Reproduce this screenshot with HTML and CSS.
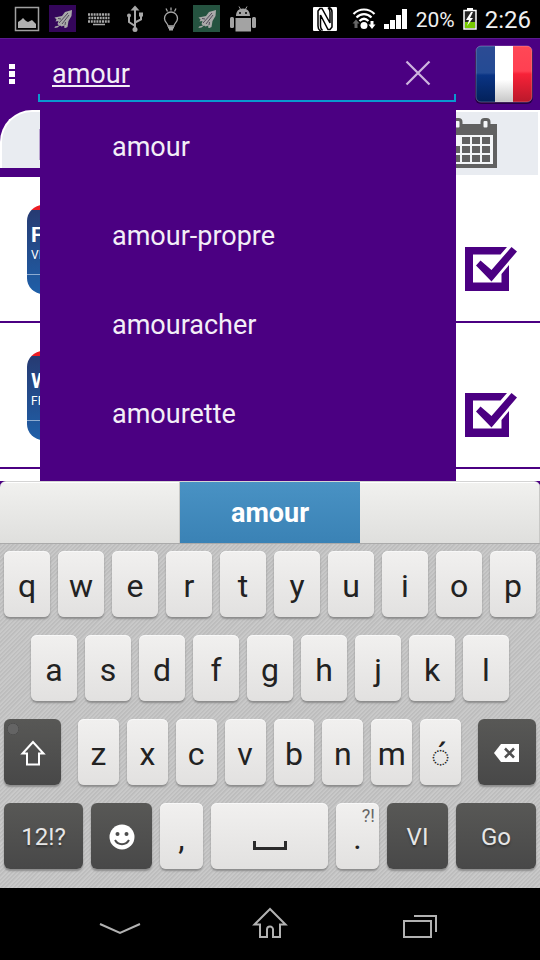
FILE: index.html
```html
<!DOCTYPE html>
<html lang="en">
<head>
<meta charset="utf-8">
<meta name="viewport" content="width=device-width, initial-scale=1">
<title>Dictionary search</title>
<link rel="stylesheet" href="styles.css">
</head>
<body>
<div class="screen">
  <header class="status">
    <div class="notices">
      <svg viewBox="0 0 36 38"><path d="M6.500 7.500h23v23h-23z" fill="none" stroke="#a0a0a0" stroke-width="1.500"/><path d="M9 28v-6l3-2 2-2 3 3 2 1 4-2 4 4v4z" fill="#b0b0b0"/></svg>
      <svg viewBox="0 0 36 38"><path d="M4 5h27v27H4z" fill="#34065a"/><use href="#plane"/></svg>
      <svg viewBox="0 0 36 38"><path d="M7 14.500h22M7.500 18h21M7 21.500h22" stroke="#a8a8a8" stroke-width="2.500" stroke-dasharray="2 .8"/><path d="M12 24.500h12" stroke="#a8a8a8" stroke-width="1.500"/></svg>
      <svg viewBox="0 0 36 38" fill="none" stroke="#a8a8a8" stroke-width="2"><path d="M18 29V8M18 26l-6-4v-6M18 22.500l6-3V15"/><path d="M13.500 10.500l4.500-5 4.500 5z" fill="#a8a8a8" stroke="none"/><circle cx="18" cy="29.500" r="2.500" fill="#a8a8a8" stroke="none"/><circle cx="12" cy="15.500" r="2" fill="#a8a8a8" stroke="none"/><path d="M22 12.500h4v4h-4z" fill="#a8a8a8" stroke="none"/></svg>
      <svg viewBox="0 0 36 38" fill="none" stroke="#a8a8a8" stroke-width="1.300"><path d="M15 26c0-3-3.500-3.500-3.500-7.500a6.500 6.500 0 0 1 13 0c0 4-3.500 4.500-3.500 7.500z"/><path d="M15 27.500h6M16 29.500h4" stroke-width="2"/><path d="M13 8.500l1.500 3M18 7.500v3M23 8.500l-1.500 3"/></svg>
      <svg viewBox="0 0 36 38"><path d="M4 5h27v27H4z" fill="#255340"/><use href="#plane"/></svg>
      <svg viewBox="0 0 36 38" fill="#a3a3a3"><path d="M11 16c0-4.500 2.500-7.500 7-7.500s7 3 7 7.500zM10.500 18h15.500v13.500H10.500z"/><path d="M14 6.500l2 3.500M22 6.500l-2 3.500" stroke="#a3a3a3"/><rect x="5" y="17" width="4" height="11" rx="1.500"/><rect x="27" y="17" width="4" height="11" rx="1.500"/><circle cx="15" cy="13" r="1" fill="#000"/><circle cx="21" cy="13" r="1" fill="#000"/></svg>
    </div>
    <div class="system">
      <svg class="nfc" viewBox="0 0 24 24"><rect width="24" height="24" rx="1" fill="#fff"/><path d="M8 24c-2.500-1-3-3-3-5V4l2-2.500h2L17 16V5c0-2-.5-3-2-4.500M16 .5c2.500 1 3 2 3 4.500v15l-2 2.500h-2L7.500 8v11c0 2 .5 3 2 4.500" fill="none" stroke="#000" stroke-width="1.500"/></svg>
      <svg class="wifi" viewBox="0 0 24 22" fill="none" stroke="#fff" stroke-width="2.200"><path d="M1.500 6c6-6 15-6 21 0M4.500 9.500c4.500-4.500 10.500-4.500 15 0M7.500 13c3-3 6-3 9 0"/><circle cx="12" cy="17.500" r="3.500" fill="#fff" stroke="none"/><path d="M18.500 13v3.500H16.500l3.500 4.500 3.500-4.500h-2V13z" fill="#fff" stroke="none"/><path d="M2.500 20v-4.500H.5L4 11.500l3.500 4h-2V20z" fill="#666" stroke="none"/></svg>
      <svg class="signal" viewBox="0 0 24 20" fill="#fff"><path d="M0 15h5v5H0zM6 11h5v9H6zM12 6h5v14h-5zM18 0h5v20h-5z"/></svg>
      <span class="percent">20%</span>
      <svg class="battery" viewBox="0 0 14 22"><path d="M4 0h6v2H4z" fill="#fff"/><path d="M1 2.500h12v18.500H1z" fill="#222" stroke="#fff" stroke-width="1.500"/><path d="M2 14h10v6H2z" fill="#76c900"/><path d="M8 4l-5 8h3l-2 6 6-8H7l3-6z" fill="#fff"/></svg>
      <time class="clock">2:26</time>
    </div>
  </header>

  <div class="searchbar">
    <button class="menu" aria-label="Menu"><svg viewBox="0 0 6 20" fill="#fff"><path d="M0 0h6v5H0zM0 7h6v6H0zM0 15h6v5H0z"/></svg></button>
    <div class="field">
      <input class="query" type="text" value="amour" aria-label="Search word">
      <button class="clear" aria-label="Clear"><svg viewBox="0 0 26 26" fill="none" stroke="#ceb5df" stroke-width="2.200"><path d="M1.500 1.500l23 23M24.500 1.500l-23 23"/></svg></button>
    </div>
    <button class="flag" aria-label="French">
      <svg viewBox="0 0 60 60">
        <defs>
          <linearGradient id="blue" x2="0" y2="1"><stop offset="0" stop-color="#2c4b94"/><stop offset=".48" stop-color="#244b94"/><stop offset=".52" stop-color="#0a3484"/><stop offset="1" stop-color="#022058"/></linearGradient>
          <linearGradient id="white" x2="0" y2="1"><stop offset=".6" stop-color="#fff"/><stop offset="1" stop-color="#c4c4c4"/></linearGradient>
          <linearGradient id="red" x2="0" y2="1"><stop offset="0" stop-color="#ff4856"/><stop offset=".45" stop-color="#ff4052"/><stop offset=".5" stop-color="#f72238"/><stop offset="1" stop-color="#b8182a"/></linearGradient>
          <clipPath id="round"><rect x="2" y="1" width="56" height="56" rx="5"/></clipPath>
        </defs>
        <rect x="1" y="2" width="58" height="57" rx="6" fill="#250044"/>
        <g clip-path="url(#round)"><path d="M0 0h21v58H0z" fill="url(#blue)"/><path d="M21 0h18v58H21z" fill="url(#white)"/><path d="M39 0h21v58H39z" fill="url(#red)"/></g>
        <rect x="2" y="1" width="56" height="56" rx="5" fill="none" stroke="#ffffff44"/>
      </svg>
    </button>
  </div>

  <main class="content">
    <div class="tabs">
      <button class="tab tab-active" aria-label="Words"><span class="tab-mark"></span></button>
      <button class="tab tab-calendar" aria-label="Calendar">
        <svg viewBox="0 0 56 51"><path d="M0 6h56v44H0z" fill="#616161"/><path d="M3 17h49v29H3z" fill="#f4f6f8"/><path d="M21 19h8v7h-8zM31 19h8v7h-8zM41 19h8v7h-8zM11 28h8v7h-8zM21 28h8v7h-8zM31 28h8v7h-8zM41 28h8v7h-8zM11 37h8v7h-8zM21 37h8v7h-8zM31 37h8v7h-8zM41 37h8v7h-8z" fill="#616161"/><g fill="#f4f6f8" stroke="#616161" stroke-width="3"><rect x="13" y="1.500" width="7" height="9.500" rx="2.500"/><rect x="41" y="1.500" width="7" height="9.500" rx="2.500"/></g></svg>
      </button>
    </div>
    <ul class="rows">
      <li class="row"><div class="badge"><b>F</b><span>VI</span></div><svg class="check" viewBox="0 0 52 46" fill="#4b0082"><use href="#tick"/></svg></li>
      <li class="row"><div class="badge"><b>W</b><span>FR</span></div><svg class="check" viewBox="0 0 52 46" fill="#4b0082"><use href="#tick"/></svg></li>
    </ul>
    <ul class="suggestions">
      <li><button>amour</button></li>
      <li><button>amour-propre</button></li>
      <li><button>amouracher</button></li>
      <li><button>amourette</button></li>
    </ul>
  </main>

  <section class="keyboard" aria-label="Keyboard">
    <div class="predictions">
      <button aria-label="Previous prediction"></button>
      <button class="chosen">amour</button>
      <button aria-label="Next prediction"></button>
    </div>
    <div class="keys">
      <div class="keyrow"><button>q</button><button>w</button><button>e</button><button>r</button><button>t</button><button>y</button><button>u</button><button>i</button><button>o</button><button>p</button></div>
      <div class="keyrow inset"><button>a</button><button>s</button><button>d</button><button>f</button><button>g</button><button>h</button><button>j</button><button>k</button><button>l</button></div>
      <div class="keyrow third">
        <button class="dark shift" aria-label="Shift"><svg viewBox="0 0 26 26" fill="none" stroke="#fff" stroke-width="2"><path d="M13 2L2.500 13.500H7V24.500h12V13.500h4.500z"/></svg></button>
        <div class="letters"><button>z</button><button>x</button><button>c</button><button>v</button><button>b</button><button>n</button><button>m</button><button class="accent">◌́</button></div>
        <button class="dark erase" aria-label="Backspace"><svg viewBox="0 0 26 20"><path d="M0 10L7 1h18v18H7z" fill="#fff"/><path d="M11 5.500l9 9M20 5.500l-9 9" stroke="#505050" stroke-width="2.500"/></svg></button>
      </div>
      <div class="keyrow fourth">
        <button class="dark">12!?</button>
        <button class="dark" aria-label="Emoji"><svg viewBox="0 0 26 26"><circle cx="13" cy="13" r="12.500" fill="#fff"/><circle cx="8.500" cy="10" r="2" fill="#4c4c4c"/><circle cx="17.500" cy="10" r="2" fill="#4c4c4c"/><path d="M6 16c3 5.500 11 5.500 14 0" fill="none" stroke="#4c4c4c" stroke-width="2"/></svg></button>
        <button>,</button>
        <button class="space" aria-label="Space"><svg viewBox="0 0 34 10" fill="none" stroke="#2b2b2b" stroke-width="3"><path d="M1.500 0v7.500h31V0"/></svg></button>
        <button class="dot">.<small>?!</small></button>
        <button class="dark">VI</button>
        <button class="dark">Go</button>
      </div>
    </div>
  </section>

  <nav class="navbar">
    <button aria-label="Back"><svg viewBox="0 0 44 36" fill="none" stroke="#b2b2b2" stroke-width="2"><path d="M2 18l20 9 20-9"/></svg></button>
    <button aria-label="Home"><svg viewBox="0 0 44 36" fill="none" stroke="#b2b2b2" stroke-width="2"><path d="M22 3L6.500 18.500H12V31h7v-7.500a3 3 0 0 1 6 0V31h7V18.500h5.500z"/></svg></button>
    <button aria-label="Recent apps"><svg viewBox="0 0 44 36" fill="none" stroke="#b2b2b2" stroke-width="2"><path d="M6 15h27v16H6zM16 10h22V26"/></svg></button>
  </nav>
</div>

<svg class="defs" aria-hidden="true">
  <symbol id="plane" viewBox="0 0 36 38" width="36" height="38"><path d="M27 10l-7 2-3 4-7.500 1.500 2 2-1 2 3-.5-1 3 1.500 1.500-4 1-.5 1.500 3-.5 2.500-2 1.500 1 3-1-.5 2 1.500.500 2-1 1-6 3-5z" fill="#a9a9a9"/><path d="M23 13l-9 10M24 15l-7 9M13 18.500l3 .5M20 25l.5-3" stroke="#3b3145" stroke-width=".8"/></symbol>
  <symbol id="tick" viewBox="0 0 52 46" width="52" height="46"><path d="M0 0h42l-6.500 7.500H8v28h28.500v-8.500l7.500-9v26H0z"/><path d="M11 18.500l4.500-5 11 9.500L46.500 0l5.500 4.500L26.500 34.500z"/></symbol>
</svg>
</body>
</html>
```

FILE: styles.css
```css
* { box-sizing: border-box; }

body {
  margin: 0;
  background: #000;
  font-family: Roboto, "Liberation Sans", sans-serif;
}

button {
  margin: 0;
  padding: 0;
  border: 0;
  background: none;
  font: inherit;
  color: inherit;
}

svg { display: block; }
ul { margin: 0; padding: 0; list-style: none; }

.defs { position: absolute; width: 0; height: 0; }

.screen {
  display: flex;
  flex-direction: column;
  min-height: 100vh;
}

/* Status bar */
.status {
  display: flex;
  justify-content: space-between;
  height: 38px;
  padding: 0 9px;
  color: #f0f0f0;
}
.notices { display: flex; }
.notices svg { width: 36px; height: 38px; }
.system { display: flex; align-items: center; gap: 8px; }
.nfc { width: 24px; height: 24px; margin-right: 7px; }
.wifi { width: 24px; height: 22px; }
.signal { width: 24px; height: 20px; }
.percent { font-size: 21px; padding-top: 2px; }
.battery { width: 14px; height: 22px; }
.clock { font-size: 24px; padding-top: 2px; }

/* Search bar */
.searchbar {
  display: flex;
  align-items: center;
  height: 72px;
  padding: 0 6px 0 9px;
  background: #4b0082;
  box-shadow: inset 0 1px #5b1a90;
}
.menu svg { width: 6px; height: 20px; }
.field {
  position: relative;
  display: flex;
  align-items: center;
  flex: 1;
  height: 72px;
  margin: 0 18px 0 23px;
  padding: 0 25px 2px 14px;
}
.field::after {
  content: "";
  position: absolute;
  inset: auto 0 8px 0;
  height: 6px;
  border: 2px solid #0a98cf;
  border-top: 0;
  pointer-events: none;
}
.query {
  flex: 1;
  min-width: 0;
  padding: 2px 0 0;
  border: 0;
  outline: 0;
  background: none;
  color: #f3eef7;
  font: 27px Roboto, "Liberation Sans", sans-serif;
  text-decoration: underline;
  text-decoration-thickness: 2px;
  text-underline-offset: 2px;
}
.clear svg { width: 26px; height: 26px; }
.flag { padding-top: 2px; }
.flag svg { width: 60px; height: 60px; }

/* Word list */
.content {
  position: relative;
  flex: 1;
  background: #fff;
}
.tabs {
  display: grid;
  grid-template-columns: 1fr 1fr;
  height: 67px;
}
.tab-active {
  background: #4b0082;
  padding-bottom: 9px;
}
.tab-mark {
  display: block;
  height: 58px;
  border: 2px solid #fff;
  border-width: 2px 0 0 2px;
  border-radius: 32px 0 0 0;
  background: linear-gradient(#b9a3cf, #b9a3cf) 37px 17px / 1px 31px no-repeat #e9ecf1;
}
.tab-calendar {
  display: flex;
  justify-content: flex-end;
  margin: 2px 2px 2px 0;
  padding: 6px 41px 6px 0;
  background: #e9ecf1;
}
.tab-calendar svg { width: 56px; height: 51px; }
.row {
  display: flex;
  justify-content: space-between;
  height: 146px;
  padding: 28px 23px 0 27px;
  border-bottom: 2px solid #4b0082;
}
.badge {
  display: flex;
  flex-direction: column;
  width: 90px;
  height: 89px;
  padding: 16px 4px 0;
  border-radius: 16px;
  color: #fff;
  background:
    linear-gradient(#ed1c24, #ed1c24) 0 0 / 100% 5px no-repeat,
    linear-gradient(#8eabd0, #8eabd0) 0 69px / 100% 1px no-repeat,
    linear-gradient(#27386f, #1f5fa8);
}
.badge b { font-size: 21px; line-height: 28px; }
.badge span { font-size: 12px; line-height: 12px; }
.check { width: 52px; height: 46px; margin-top: 42px; }

.suggestions {
  position: absolute;
  inset: 0 84px 0 40px;
  display: flex;
  flex-direction: column;
  gap: 17px;
  padding-top: 1px;
  background: #4b0082;
}
.suggestions button {
  width: 100%;
  height: 72px;
  padding-left: 72px;
  color: #f3eef7;
  font-size: 27px;
  text-align: left;
}

/* Keyboard */
.keyboard { background: #4b0082; color: #222; }
.predictions {
  display: grid;
  grid-template-columns: repeat(3, 1fr);
  height: 63px;
  overflow: hidden;
  border-radius: 6px 6px 0 0;
  border-top: 1px solid #d4d4d4;
  border-bottom: 1px solid #aaa;
  background: linear-gradient(#f1f1ef, #dfdfdd);
}
.predictions button { border-right: 1px solid #c8c8c6; box-shadow: inset 0 1px #fff; }
.predictions .chosen {
  border: 0;
  background: linear-gradient(#4992c4, #3a82b5);
  box-shadow: none;
  color: #fff;
  font-size: 27px;
  font-weight: 700;
}
.keys {
  display: flex;
  flex-direction: column;
  gap: 18px;
  padding: 7px 4px 19px;
  background: repeating-linear-gradient(135deg, #bdbdbd 0 1px, #c9c9c9 2px 3px);
}
.keyrow, .letters { display: flex; gap: 8px; }
.keyrow button {
  flex: 1;
  min-width: 0;
  height: 66px;
  padding-top: 4px;
  border-radius: 6px;
  background: linear-gradient(#f1f0ef, #e2e1e0);
  box-shadow: 0 2px 2px #8c8c8c, inset 0 1px #f8f8f8;
  font-size: 32px;
}
.keyrow.inset { padding: 0 27px; }
.keyrow.third { gap: 17px; }
.letters { flex: 1; }
.keyrow button.dark {
  padding: 2px 0 0;
  background: linear-gradient(#585856, #484848);
  box-shadow: 0 2px 2px #8c8c8c;
  color: #e6e6e6;
  font-size: 24px;
  text-shadow: 0 2px 2px #333;
}
.keyrow svg { margin: auto; }
.keyrow .shift, .keyrow .erase { flex: 0 0 58px; }
.keyrow .shift { flex-basis: 57px; }
.keyrow button.shift {
  background:
    radial-gradient(circle at 9px 10px, #646464 5px, #444 6px, transparent 6px),
    linear-gradient(#585856, #484848);
}
.shift svg, .fourth .dark svg { width: 26px; height: 26px; }
.erase svg { width: 26px; height: 20px; }
.keyrow .accent { font-family: "Noto Sans", sans-serif; }
.fourth { display: grid; grid-template-columns: 79fr 61fr 43fr 117fr 43fr 61fr 80fr; }
.space svg { width: 34px; height: 10px; margin-top: 16px; }
.dot { position: relative; }
.dot small {
  position: absolute;
  top: 2px;
  right: 4px;
  color: #666;
  font-size: 18px;
}

/* System navigation */
.navbar {
  display: flex;
  justify-content: center;
  gap: 106px;
  height: 72px;
  padding-top: 18px;
}
.navbar svg { width: 44px; height: 36px; }
.navbar button { height: 36px; }
```
